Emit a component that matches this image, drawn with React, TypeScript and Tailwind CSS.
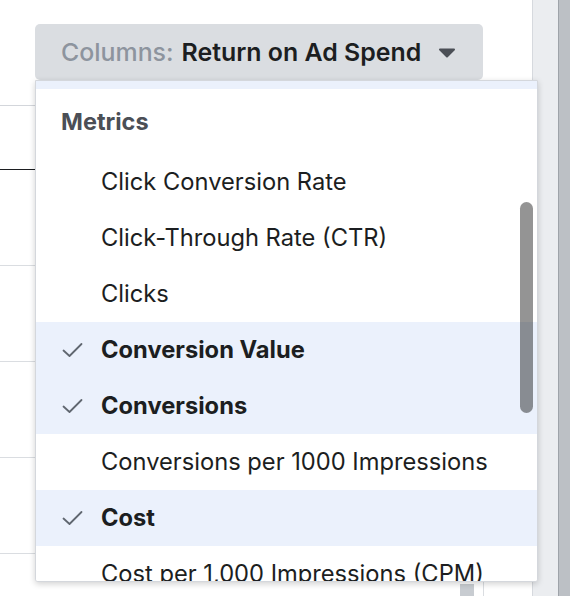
import React from 'react';

type Item = { label: string; checked?: boolean };

const items: Item[] = [
  { label: 'Click Conversion Rate' },
  { label: 'Click-Through Rate (CTR)' },
  { label: 'Clicks' },
  { label: 'Conversion Value', checked: true },
  { label: 'Conversions', checked: true },
  { label: 'Conversions per 1000 Impressions' },
  { label: 'Cost', checked: true },
  { label: 'Cost per 1,000 Impressions (CPM)' },
];

function Check() {
  return (
    <svg width="21" height="16" viewBox="0 0 21 16" fill="none">
      <polyline
        points="1.5,8.5 7.5,14 19.5,2"
        stroke="#606770"
        strokeWidth="1.8"
        strokeLinecap="round"
        strokeLinejoin="round"
      />
    </svg>
  );
}

function Caret() {
  return (
    <svg width="18" height="10" viewBox="0 0 18 10">
      <path d="M2 1.5 H16 L9 8.5 Z" fill="#4b4f56" stroke="#4b4f56" strokeWidth="2" strokeLinejoin="round" />
    </svg>
  );
}

function Row({ item }: { item: Item }) {
  return (
    <div
      className={`flex h-[56px] shrink-0 items-center ${item.checked ? 'bg-[#ebf1fc]' : 'bg-white'}`}
    >
      <div className="flex w-[65px] justify-end pr-[18px]">{item.checked && <Check />}</div>
      <span
        className={`whitespace-nowrap text-[23.7px] text-[#1c1e21] ${item.checked ? 'font-bold' : 'font-normal'}`}
      >
        {item.label}
      </span>
    </div>
  );
}

export default function App() {
  return (
    <div className="flex h-[596px] w-[570px] overflow-hidden bg-white font-['Inter','Noto_Sans',sans-serif]">
      <div className="relative h-full w-[532px] shrink-0">
        {/* table rows behind the menu */}
        <div className="flex flex-col">
          <div className="h-[105px]" />
          <div className="h-px bg-[#d3d6db]" />
          <div className="h-[63px]" />
          <div className="h-px bg-[#1c1e21]" />
          <div className="h-[95px]" />
          <div className="h-px bg-[#dadde1]" />
          <div className="h-[95px]" />
          <div className="h-px bg-[#dadde1]" />
          <div className="h-[95px]" />
          <div className="h-px bg-[#dadde1]" />
          <div className="h-[95px]" />
          <div className="h-px bg-[#dadde1]" />
          <div className="flex h-[42px]">
            <div className="ml-[460px] mt-[30px] h-[12px] w-[14px] bg-[#c8ccd1]" />
            <div className="ml-[9px] h-full w-px bg-[#dadde1]" />
          </div>
        </div>

        <button className="absolute left-[35px] top-[24px] flex h-[56px] w-[448px] items-center rounded-[5px] bg-[#dadde1] pl-[26px] text-[24.9px] leading-none">
          <span className="font-medium text-[#8d949e]">Columns:</span>
          <span className="ml-[8px] font-semibold text-[#1c1e21]">Return on Ad Spend</span>
          <span className="ml-[17px] mt-[2px]">
            <Caret />
          </span>
        </button>

        {/* dropdown menu */}
        <div className="absolute left-[35px] top-[80px] z-10 h-[502px] w-[503px] overflow-hidden rounded-b-[3px] border border-[#d4d7dc] bg-white shadow-[0_2px_6px_rgba(0,0,0,0.18)]">
          <div className="flex h-full flex-col">
            <div className="h-[8px] shrink-0 bg-[#ebf1fc]" />
            <div className="flex h-[65px] shrink-0 items-center pl-[25px] text-[23.5px] font-bold text-[#4b4f56]">
              Metrics
            </div>
            {items.map((it) => (
              <Row key={it.label} item={it} />
            ))}
          </div>
          <div className="absolute left-[484px] top-[121px] h-[211px] w-[13px] rounded-full bg-[rgba(0,0,0,0.42)]" />
        </div>
      </div>

      <div className="h-full w-[26px] shrink-0 border-l border-[#d6d9de] bg-[#ebedf0]" />
      <div className="h-full w-[12px] shrink-0 border-l border-[#9ea3a9] bg-[#bcc0c5]" />
    </div>
  );
}
